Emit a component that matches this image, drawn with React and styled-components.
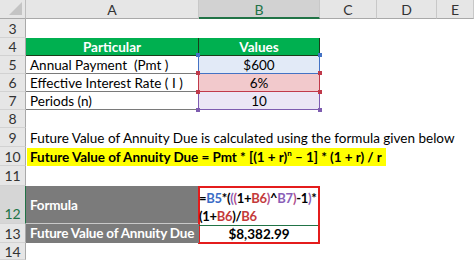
import React from 'react';
import styled, { createGlobalStyle, css } from 'styled-components';

const Global = createGlobalStyle`
  html, body { margin: 0; padding: 0; background: #fff; }
  body { font-family: Lato, "Liberation Sans", sans-serif; }
`;

const Sheet = styled.div`
  display: grid;
  grid-template-columns: 26px 173px 121px 57px 60px 37px;
  grid-template-rows: 19px 19px 18px 18px 18px 18px 18px 19px 19px 20px 38px 19px 17px;
  width: 474px;
  height: 260px;
  overflow: hidden;
  font-size: 13.5px;
  color: #000;
`;

const Corner = styled.div`
  background: #e6e6e6;
  border-right: 1px solid #bdbdbd;
  border-bottom: 1px solid #a9a9a9;
  position: relative;
  overflow: hidden;
`;

const Triangle = styled.div`
  position: absolute;
  right: 3px;
  bottom: 3px;
  width: 0;
  height: 0;
  border-left: 13px solid transparent;
  border-bottom: 13px solid #c4c4c4;
`;

const ColHead = styled.div`
  display: flex;
  align-items: center;
  justify-content: center;
  background: ${p => (p.$selected ? '#d2d2d2' : '#e6e6e6')};
  color: ${p => (p.$selected ? '#217346' : '#333')};
  border-right: 1px solid #c8c8c8;
  border-bottom: ${p => (p.$selected ? '2px solid #217346' : '1px solid #a9a9a9')};
  font-size: 14px;
  padding-top: 1px;
`;

const RowHead = styled.div`
  grid-column: 1;
  display: flex;
  justify-content: center;
  align-items: ${p => (p.$bottom ? 'flex-end' : 'center')};
  background: ${p => (p.$selected ? '#d6d6d6' : '#e6e6e6')};
  color: ${p => (p.$selected ? '#217346' : '#333')};
  border-bottom: 1px solid #d2d2d2;
  border-right: ${p => (p.$selected ? '1px solid #217346' : '1px solid #a9a9a9')};
  font-size: 14px;
  padding-bottom: ${p => (p.$bottom ? '1px' : '0')};
`;

const Empty = styled.div`
  grid-column: span ${p => p.$span || 5};
`;

const HeadCell = styled.div`
  display: flex;
  align-items: center;
  justify-content: center;
  background: #00b050;
  color: #fff;
  font-weight: 700;
  border-right: 1px solid #1a3d1a;
  border-bottom: 1px solid #1a3d1a;
`;

const LabelCell = styled.div`
  display: flex;
  align-items: center;
  padding-left: 4px;
  border-bottom: 1px solid #7a7a7a;
  white-space: nowrap;
`;

const tones = {
  blue: { bg: '#e2eaf7', line: '#4472c4' },
  red: { bg: '#f2c9cc', line: '#c0394a' },
  purple: { bg: '#ebe6f5', line: '#7e5cb0' },
};

const ValueCell = styled.div`
  position: relative;
  display: flex;
  align-items: center;
  justify-content: center;
  background: ${p => tones[p.$tone].bg};
  border-left: 1px solid ${p => tones[p.$tone].line};
  border-right: 1px solid ${p => tones[p.$tone].line};
  border-bottom: 1px solid ${p => tones[p.$tone].line};
  ${p => p.$top && css`border-top: 1px solid ${tones[p.$tone].line};`}
  margin-left: -1px;
`;

const Handle = styled.span`
  position: absolute;
  width: 4px;
  height: 4px;
  background: ${p => tones[p.$tone].line};
  z-index: ${p => p.$z || 1};
  ${p => (p.$side === 'left' ? 'left: -3px;' : 'right: -3px;')}
  ${p => (p.$edge === 'top' ? 'top: -3px;' : 'bottom: -3px;')}
`;

const TextCell = styled.div`
  grid-column: span 5;
  display: flex;
  align-items: center;
  padding-left: 4px;
  white-space: nowrap;
`;

const Highlight = styled.span`
  background: #ffff00;
  font-weight: 700;
  margin-left: -3px;
  padding: 0 4px 0 3px;
  line-height: 18px;
  height: 18px;
  display: inline-block;
  letter-spacing: -0.05px;
`;

const Sup = styled.sup`
  font-size: 8px;
  vertical-align: 6px;
  line-height: 0;
`;

const GrayCell = styled.div`
  display: flex;
  align-items: center;
  padding-left: 4px;
  background: #7b7b7b;
  color: #fff;
  font-weight: 700;
  white-space: nowrap;
  letter-spacing: -0.2px;
  border-bottom: 1px solid ${p => (p.$sep ? '#c9c9c9' : '#7b7b7b')};
`;

const ResultBox = styled.div`
  grid-row: span 2;
  display: grid;
  grid-template-rows: 38px 1fr;
  border: 2px solid #e41c1c;
  margin-left: -1px;
  margin-bottom: -1px;
`;

const FormulaCell = styled.div`
  display: flex;
  flex-direction: column;
  justify-content: flex-start;
  font-size: 13px;
  font-weight: 700;
  line-height: 18px;
  padding-top: 1px;
  border-bottom: 1px solid #217346;
  white-space: nowrap;
  letter-spacing: -0.3px;
  margin-left: -1px;
`;

const Amount = styled.div`
  display: flex;
  align-items: center;
  justify-content: center;
  font-weight: 700;
`;

const Ref = styled.span`
  color: ${p => p.$c};
`;

const C = { blue: '#3a6cc6', red: '#c43a3a', purple: '#8a5fb8', paren2: '#8a5fb8', paren3: '#b04d8c' };

export default function App() {
  return (
    <>
      <Global />
      <Sheet>
        <Corner><Triangle /></Corner>
        <ColHead>A</ColHead>
        <ColHead $selected>B</ColHead>
        <ColHead>C</ColHead>
        <ColHead>D</ColHead>
        <ColHead>E</ColHead>

        <RowHead>3</RowHead>
        <Empty />

        <RowHead>4</RowHead>
        <HeadCell>Particular</HeadCell>
        <HeadCell>Values</HeadCell>
        <Empty $span={3} />

        <RowHead>5</RowHead>
        <LabelCell>Annual Payment&nbsp;&nbsp;(Pmt )</LabelCell>
        <ValueCell $tone="blue">
          $600
          <Handle $tone="blue" $side="left" $edge="top" />
          <Handle $tone="blue" $side="right" $edge="top" />
        </ValueCell>
        <Empty $span={3} />

        <RowHead>6</RowHead>
        <LabelCell>Effective Interest Rate ( I )</LabelCell>
        <ValueCell $tone="red">
          6%
          <Handle $tone="red" $side="left" $edge="top" $z={2} />
          <Handle $tone="red" $side="right" $edge="top" $z={2} />
          <Handle $tone="red" $side="left" $edge="bottom" $z={2} />
          <Handle $tone="red" $side="right" $edge="bottom" $z={2} />
        </ValueCell>
        <Empty $span={3} />

        <RowHead>7</RowHead>
        <LabelCell>Periods (n)</LabelCell>
        <ValueCell $tone="purple">
          10
          <Handle $tone="purple" $side="left" $edge="bottom" />
          <Handle $tone="purple" $side="right" $edge="bottom" />
        </ValueCell>
        <Empty $span={3} />

        <RowHead>8</RowHead>
        <Empty />

        <RowHead>9</RowHead>
        <TextCell>Future Value of Annuity Due is calculated using the formula given below</TextCell>

        <RowHead>10</RowHead>
        <TextCell>
          <Highlight>
            Future Value of Annuity Due = Pmt * [(1 + r)<Sup>n</Sup> – 1] * (1 + r) / r
          </Highlight>
        </TextCell>

        <RowHead>11</RowHead>
        <Empty />

        <RowHead $selected $bottom>12</RowHead>
        <GrayCell $sep>Formula</GrayCell>
        <ResultBox>
          <FormulaCell>
            <span>
              =<Ref $c={C.blue}>B5</Ref>*(<Ref $c={C.paren2}>(</Ref><Ref $c={C.paren3}>(</Ref>1+<Ref $c={C.red}>B6</Ref><Ref $c={C.paren3}>)</Ref>^<Ref $c={C.purple}>B7</Ref><Ref $c={C.paren3}>)</Ref>-1<Ref $c={C.paren2}>)</Ref>*
            </span>
            <span>
              (1+<Ref $c={C.red}>B6</Ref>)/<Ref $c={C.red}>B6</Ref>
            </span>
          </FormulaCell>
          <Amount>$8,382.99</Amount>
        </ResultBox>
        <Empty $span={3} />

        <RowHead>13</RowHead>
        <GrayCell>Future Value of Annuity Due</GrayCell>
        <Empty $span={3} />

        <RowHead>14</RowHead>
        <Empty />
      </Sheet>
    </>
  );
}
